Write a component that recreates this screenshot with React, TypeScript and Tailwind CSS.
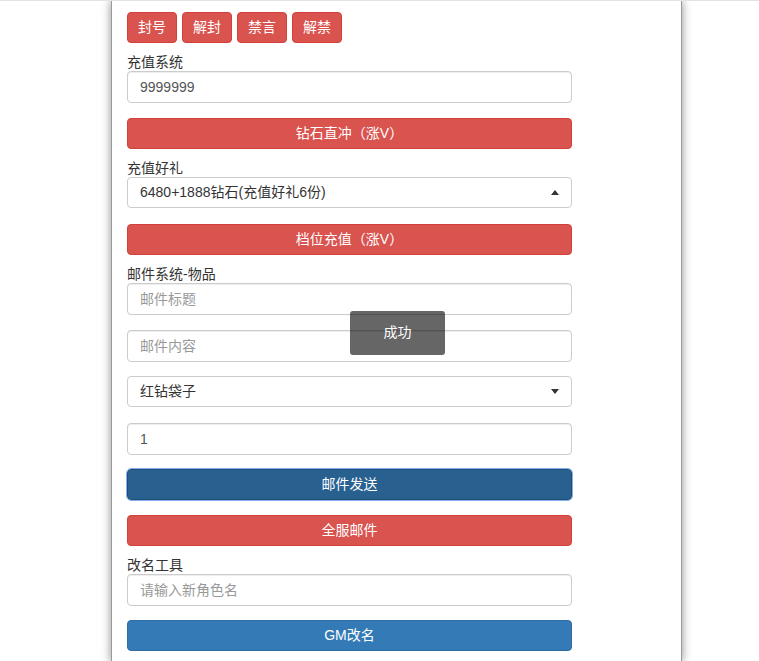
import React from 'react';

const font = { fontFamily: '"Liberation Sans", "Noto Sans CJK SC", sans-serif' };

const Label: React.FC<{ text: string; mt: string }> = ({ text, mt }) => (
  <div className={`${mt} h-[17px] text-[14px] leading-[17px] text-[#333]`}>{text}</div>
);

const Input: React.FC<{ value?: string; placeholder?: string; mt?: string }> = ({ value, placeholder, mt = '' }) => (
  <input
    className={`${mt} block w-full h-[32px] px-[12px] rounded-[4px] border border-[#ccc] bg-white text-[14px] text-[#555] placeholder:text-[#999] outline-none shadow-[inset_0_1px_1px_rgba(0,0,0,0.075)]`}
    defaultValue={value}
    placeholder={placeholder}
  />
);

const Select: React.FC<{ text: string; up?: boolean; mt?: string }> = ({ text, up, mt = '' }) => (
  <div className={`${mt} flex items-center justify-between h-[31px] pl-[12px] pr-[12px] rounded-[4px] border border-[#ccc] bg-white text-[14px] text-[#333]`}>
    <span>{text}</span>
    <svg width="8" height="5" viewBox="0 0 8 5">
      {up ? <path d="M0 5 L4 0 L8 5 Z" fill="#333" /> : <path d="M0 0 L8 0 L4 5 Z" fill="#333" />}
    </svg>
  </div>
);

const Btn: React.FC<{ text: string; color: 'red' | 'blue' | 'navy'; mt: string }> = ({ text, color, mt }) => {
  const cls =
    color === 'red'
      ? 'bg-[#d9534f] border-[#d43f3a]'
      : color === 'blue'
      ? 'bg-[#337ab7] border-[#2e6da4]'
      : 'bg-[#286090] border-[#204d74] outline outline-1 outline-[#86aef0]';
  return (
    <button className={`${mt} ${cls} block w-full h-[31px] rounded-[4px] border text-white text-[14px] leading-none pb-[1px]`}>
      {text}
    </button>
  );
};

export default function App() {
  return (
    <div className="relative min-h-[661px] bg-white border-t border-[#e3e3e3] overflow-hidden" style={font}>
      <div className="ml-[111px] w-[571px] min-h-[661px] bg-white border-x border-[#9a9a9a] shadow-[0_0_9px_rgba(0,0,0,0.45)] pl-[15px] pt-[11px] pb-[10px]">
        <div className="w-[445px]">
          <div className="flex gap-[5px]">
            {['封号', '解封', '禁言', '解禁'].map((t) => (
              <button
                key={t}
                className="w-[50px] h-[31px] rounded-[4px] border border-[#d43f3a] bg-[#d9534f] text-white text-[14px] pb-[1px]"
              >
                {t}
              </button>
            ))}
          </div>

          <Label text="充值系统" mt="mt-[11px]" />
          <Input value="9999999" />
          <Btn text="钻石直冲（涨V）" color="red" mt="mt-[15px]" />

          <Label text="充值好礼" mt="mt-[11px]" />
          <Select text="6480+1888钻石(充值好礼6份)" up />
          <Btn text="档位充值（涨V）" color="red" mt="mt-[16px]" />

          <Label text="邮件系统-物品" mt="mt-[11px]" />
          <Input placeholder="邮件标题" />
          <Input placeholder="邮件内容" mt="mt-[15px]" />
          <Select text="红钻袋子" mt="mt-[14px]" />
          <Input value="1" mt="mt-[16px]" />
          <Btn text="邮件发送" color="navy" mt="mt-[14px]" />
          <Btn text="全服邮件" color="red" mt="mt-[15px]" />

          <Label text="改名工具" mt="mt-[11px]" />
          <Input placeholder="请输入新角色名" />
          <Btn text="GM改名" color="blue" mt="mt-[14px]" />
        </div>
      </div>

      <div className="absolute left-[350px] top-[310px] w-[95px] h-[44px] rounded-[3px] bg-[rgba(0,0,0,0.6)] flex items-center justify-center text-white text-[14px] pb-[1px]">
        成功
      </div>
    </div>
  );
}
